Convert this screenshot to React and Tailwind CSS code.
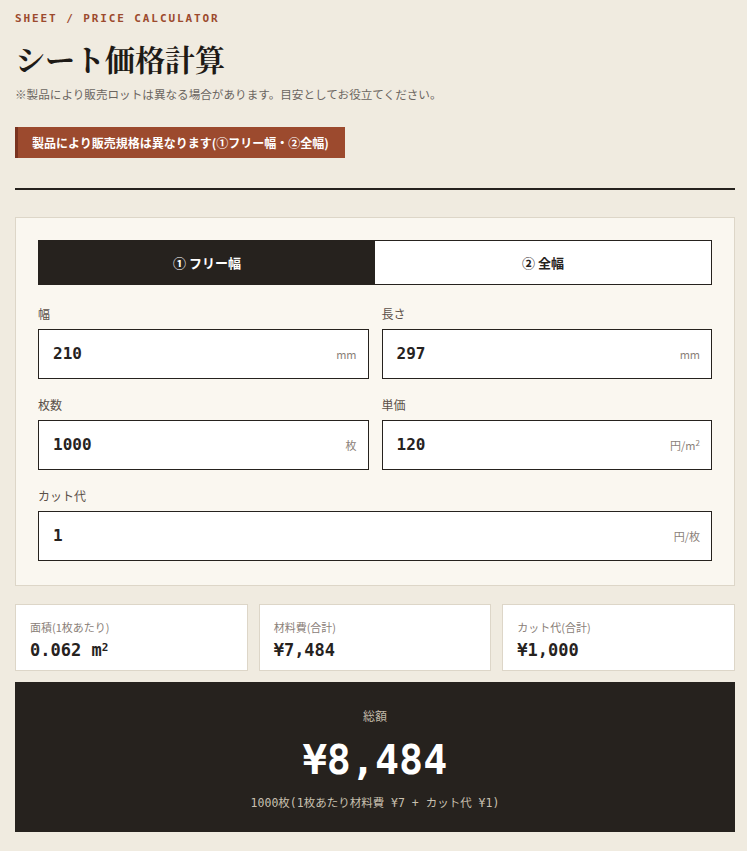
import { useState } from "react";

const mono = "font-['DejaVu_Sans_Mono','Noto_Sans_CJK_JP',monospace]";

function Field({ label, value, unit }) {
  return (
    <div>
      <p className="text-[12px] text-[#5a5048] mb-[7px] leading-[16px]">{label}</p>
      <div className="h-[50px] border-[1.5px] border-[#26221e] bg-white flex items-center justify-between pl-[14px] pr-[11px]">
        <span className={`${mono} text-[16px] font-bold text-[#26221e]`}>{value}</span>
        <span className="text-[11px] text-[#8a8078]">{unit}</span>
      </div>
    </div>
  );
}

function Stat({ label, value }) {
  return (
    <div className="bg-white border border-[#ddd6c8] h-[67px] px-[14px] pt-[15px]">
      <p className="text-[11px] text-[#8a8078] leading-[14px]">{label}</p>
      <p className={`${mono} text-[17px] font-bold text-[#26221e] mt-[5px] leading-[22px]`}>{value}</p>
    </div>
  );
}

export default function App() {
  const [tab, setTab] = useState(0);

  return (
    <div className="min-h-[851px] bg-[#f0ebe0] pl-[15px] pr-[12px] pt-[12px] pb-[18px] font-['Noto_Sans_CJK_JP',sans-serif]">
      <p className={`${mono} text-[11px] font-bold tracking-[1.9px] text-[#9c4a2e] leading-[14px]`}>
        SHEET / PRICE CALCULATOR
      </p>
      <h1 className="mt-[14px] text-[30px] font-bold leading-[36px] text-[#1e1a16] font-['Noto_Serif_CJK_JP','Noto_Serif_JP',serif]">
        シート価格計算
      </h1>
      <p className="mt-[10px] text-[11.6px] text-[#6b6560] leading-[16px]">
        ※製品により販売ロットは異なる場合があります。目安としてお役立てください。
      </p>

      <div className="mt-[25px] inline-flex items-center h-[31px] bg-[#9c4a2e] border-l-[3px] border-[#7a3320] pl-[14px] pr-[16px]">
        <span className="text-[12px] font-bold text-white">製品により販売規格は異なります(①フリー幅・②全幅)</span>
      </div>

      <div className="mt-[30px] h-[2px] bg-[#26221e]" />

      <div className="mt-[27px] bg-[#faf7f0] border border-[#ddd6c8] px-[22px] pt-[22px] pb-[24px]">
        <div className="grid grid-cols-2 h-[45px] border-[1.5px] border-[#26221e]">
          <button
            onClick={() => setTab(0)}
            className={`text-[13px] font-bold ${tab === 0 ? "bg-[#26221e] text-white" : "bg-white text-[#26221e]"}`}
          >
            ① フリー幅
          </button>
          <button
            onClick={() => setTab(1)}
            className={`text-[13px] font-bold ${tab === 1 ? "bg-[#26221e] text-white" : "bg-white text-[#26221e]"}`}
          >
            ② 全幅
          </button>
        </div>

        <div className="mt-[21px] grid grid-cols-2 gap-x-[13px] gap-y-[18px]">
          <Field label="幅" value="210" unit="mm" />
          <Field label="長さ" value="297" unit="mm" />
          <Field label="枚数" value="1000" unit="枚" />
          <Field
            label="単価"
            value="120"
            unit={
              <>
                円/m<sup className="text-[8px]">2</sup>
              </>
            }
          />
          <div className="col-span-2">
            <Field label="カット代" value="1" unit="円/枚" />
          </div>
        </div>
      </div>

      <div className="mt-[18px] grid grid-cols-3 gap-[11px]">
        <Stat label="面積(1枚あたり)" value={<>0.062 m<sup className="text-[11px]">2</sup></>} />
        <Stat label="材料費(合計)" value="¥7,484" />
        <Stat label="カット代(合計)" value="¥1,000" />
      </div>

      <div className="mt-[11px] bg-[#26221e] h-[150px] flex flex-col items-center pt-[26px]">
        <p className="text-[12px] text-[#c0b8a8] leading-[16px]">総額</p>
        <p className={`${mono} text-[40px] font-bold text-white leading-[52px] mt-[10px]`}>¥8,484</p>
        <p className={`${mono} text-[11.5px] text-[#c8c0b0] leading-[16px] mt-[9px]`}>
          1000枚(1枚あたり材料費 ¥7 + カット代 ¥1)
        </p>
      </div>
    </div>
  );
}
